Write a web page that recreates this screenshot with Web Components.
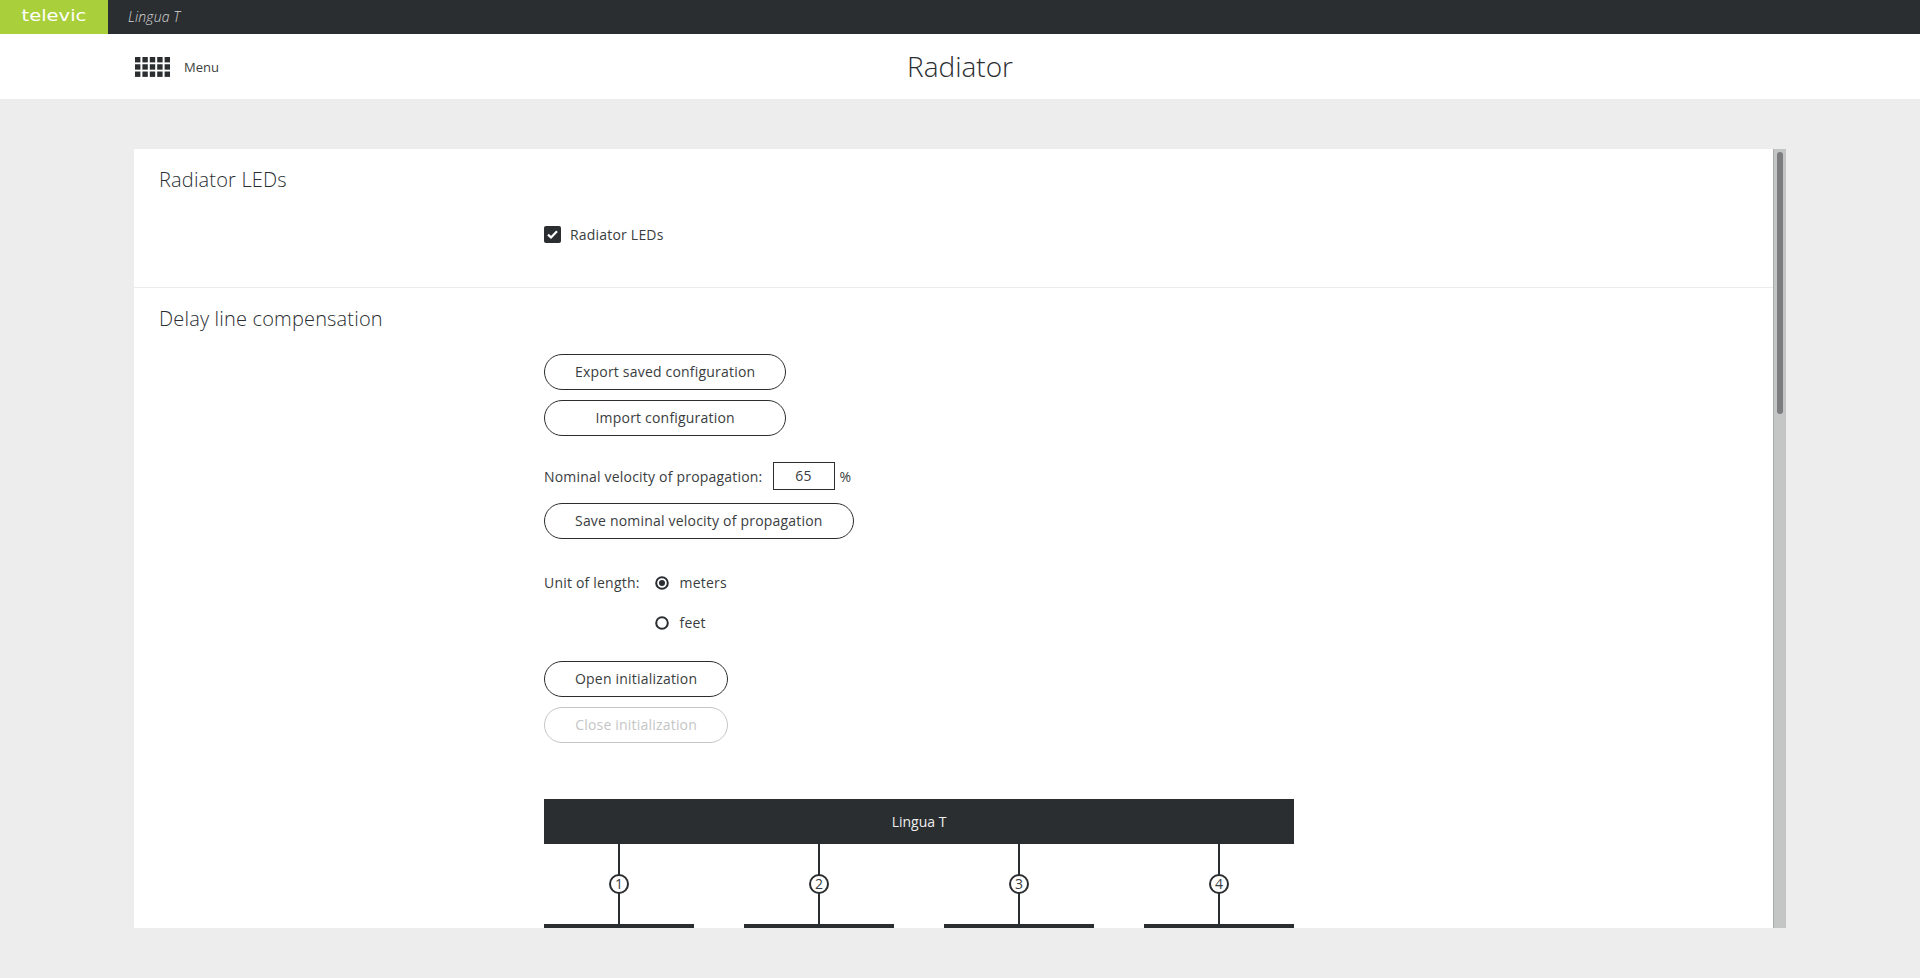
<!DOCTYPE html>
<html lang="en">
<head>
<meta charset="utf-8">
<title>Radiator</title>
<style>
  html, body { margin: 0; height: 100%; overflow: hidden; }
  body { background: #ededed; color: #2a2e31; font-family: "Open Sans", "Liberation Sans", sans-serif; }
</style>
</head>
<body>
<app-bar product="Lingua T"></app-bar>
<page-header heading="Radiator"></page-header>
<main-panel>
  <panel-section heading="Radiator LEDs" style="height:139px; --body-top:29px">
    <led-checkbox>Radiator LEDs</led-checkbox>
  </panel-section>
  <panel-section heading="Delay line compensation" style="--body-top:22px" last>
    <delay-form></delay-form>
    <line-diagram></line-diagram>
  </panel-section>
</main-panel>

<script>
class AppBar extends HTMLElement {
  constructor() {
    super();
    this.attachShadow({ mode: "open" });
  }

  connectedCallback() {
    this.shadowRoot.innerHTML = `
      <style>
        :host { display: flex; height: 34px; background: #2a2e31; align-items: center; }
        .logo {
          width: 108px;
          height: 34px;
          background: #a9d03a;
          display: flex;
          align-items: center;
          justify-content: center;
          color: #fff;
          font-family: "DejaVu Sans", sans-serif;
          font-size: 15px;
          overflow: hidden;
        }
        .logo span { display: inline-block; transform: translateY(-1px) scaleX(1.3); }
        .product {
          margin-left: 20px;
          padding-bottom: 2px;
          color: #d5d6d6;
          font-size: 14px;
          font-style: italic;
          font-weight: 300;
          letter-spacing: 0.15px;
        }
      </style>
      <div class="logo"><span>televic</span></div>
      <div class="product">${this.getAttribute("product")}</div>
    `;
  }
}

class PageHeader extends HTMLElement {
  constructor() {
    super();
    this.attachShadow({ mode: "open" });
  }

  connectedCallback() {
    this.shadowRoot.innerHTML = `
      <style>
        :host {
          display: grid;
          grid-template-columns: 1fr auto 1fr;
          align-items: center;
          height: 65px;
          padding-left: 135px;
          padding-right: 135px;
          background: #fff;
        }
        .menu { display: flex; align-items: center; gap: 14px; font-size: 13px; color: #3b3e41; }
        svg { display: block; }
        h1 { margin: 0; padding-bottom: 2px; font-size: 28px; font-weight: 300; color: #2a2e31; }
      </style>
      <div class="menu">
        <svg width="35" height="20" viewBox="0 0 35 20" fill="#2a2e31">
          ${[0, 7.25, 14.5].map(y => [0, 7.4, 14.8, 22.2, 29.6].map(x => `<rect x="${x}" y="${y}" width="5.4" height="5.4"/>`).join("")).join("")}
        </svg>
        <span>Menu</span>
      </div>
      <h1>${this.getAttribute("heading")}</h1>
      <div></div>
    `;
  }
}

class MainPanel extends HTMLElement {
  constructor() {
    super();
    this.attachShadow({ mode: "open" });
  }

  connectedCallback() {
    this.shadowRoot.innerHTML = `
      <style>
        :host { display: flex; margin: 50px 134px 0; height: 779px; background: #fff; }
        .scroll { flex: 1; min-width: 0; overflow: hidden; }
        .track {
          box-sizing: border-box;
          flex: none;
          width: 13px;
          padding: 3px 3px 0 3px;
          background: #c4c6c5;
          border-left: 1px solid #a9abaa;
        }
        .thumb { height: 262px; border-radius: 4px; background: #7a7e7e; }
      </style>
      <div class="scroll"><slot></slot></div>
      <div class="track"><div class="thumb"></div></div>
    `;
  }
}

class PanelSection extends HTMLElement {
  constructor() {
    super();
    this.attachShadow({ mode: "open" });
  }

  connectedCallback() {
    this.shadowRoot.innerHTML = `
      <style>
        :host { display: block; box-sizing: border-box; border-bottom: 1px solid #ececec; }
        :host([last]) { border-bottom: 0; }
        h2 {
          margin: 0;
          padding: 17px 25px 0;
          font-size: 20px;
          line-height: 27px;
          font-weight: 300;
          letter-spacing: 0.17px;
          color: #2a2e31;
        }
        .body { padding: var(--body-top, 28px) 0 0 410px; }
      </style>
      <h2>${this.getAttribute("heading")}</h2>
      <div class="body"><slot></slot></div>
    `;
  }
}

class LedCheckbox extends HTMLElement {
  constructor() {
    super();
    this.attachShadow({ mode: "open" });
  }

  connectedCallback() {
    this.shadowRoot.innerHTML = `
      <style>
        :host { display: inline-flex; align-items: center; gap: 9px; font-size: 14px; font-weight: 500; letter-spacing: 0.2px; line-height: 17px; color: #3a3d40; }
        .box { width: 17px; height: 17px; border-radius: 2px; background: #2a2e31; display: flex; align-items: center; justify-content: center; }
      </style>
      <span class="box">
        <svg width="11" height="9" viewBox="0 0 11 9"><path d="M1 4.6 L4 7.4 L10 1.2" fill="none" stroke="#fff" stroke-width="2.2"/></svg>
      </span>
      <span><slot></slot></span>
    `;
  }
}

class PillButton extends HTMLElement {
  constructor() {
    super();
    this.attachShadow({ mode: "open" });
  }

  connectedCallback() {
    this.shadowRoot.innerHTML = `
      <style>
        :host {
          display: block;
          box-sizing: border-box;
          height: 36px;
          padding: 0 30px;
          border: 1px solid #2a2e31;
          border-radius: 18px;
          font-size: 14px;
          font-weight: 500;
          letter-spacing: 0.2px;
          line-height: 34px;
          text-align: center;
          white-space: nowrap;
          color: #3a3d40;
          background: #fff;
        }
        :host([disabled]) { border-color: #c4c6c6; color: #c4c6c6; }
      </style>
      <slot></slot>
    `;
  }
}

class RadioOption extends HTMLElement {
  constructor() {
    super();
    this.attachShadow({ mode: "open" });
  }

  connectedCallback() {
    this.shadowRoot.innerHTML = `
      <style>
        :host { display: flex; align-items: center; gap: 11px; font-size: 14px; font-weight: 500; letter-spacing: 0.2px; line-height: 20px; color: #3a3d40; }
        svg { display: block; }
      </style>
      <svg width="14" height="14" viewBox="0 0 14 14">
        <circle cx="7" cy="7" r="5.8" fill="none" stroke="#2a2e31" stroke-width="2"/>
        ${this.hasAttribute("checked") ? '<circle cx="7" cy="7" r="3" fill="#2a2e31"/>' : ""}
      </svg>
      <span><slot></slot></span>
    `;
  }
}

class DelayForm extends HTMLElement {
  constructor() {
    super();
    this.attachShadow({ mode: "open" });
  }

  connectedCallback() {
    this.shadowRoot.innerHTML = `
      <style>
        :host { display: block; font-size: 14px; font-weight: 500; letter-spacing: 0.2px; color: #3a3d40; }
        .group { display: inline-grid; gap: 10px; vertical-align: top; }
        .stack { display: block; }
        .velocity { display: flex; align-items: center; height: 28px; margin-top: 26px; }
        .input {
          box-sizing: border-box;
          width: 62px;
          height: 28px;
          margin: 0 5px 0 10px;
          border: 1px solid #2a2e31;
          font-weight: 400;
          line-height: 26px;
          text-align: center;
        }
        .save { margin-top: 13px; }
        .unit { display: grid; grid-template-columns: auto auto; justify-content: start; column-gap: 15px; row-gap: 20px; margin-top: 34px; }
        .init { margin-top: 28px; }
      </style>
      <div class="stack"><div class="group">
        <pill-button>Export saved configuration</pill-button>
        <pill-button>Import configuration</pill-button>
      </div></div>
      <div class="velocity">
        <span>Nominal velocity of propagation:</span>
        <span class="input">65</span>
        <span>%</span>
      </div>
      <div class="stack save"><div class="group">
        <pill-button>Save nominal velocity of propagation</pill-button>
      </div></div>
      <div class="unit">
        <span>Unit of length:</span>
        <radio-option checked>meters</radio-option>
        <span></span>
        <radio-option>feet</radio-option>
      </div>
      <div class="stack init"><div class="group">
        <pill-button>Open initialization</pill-button>
        <pill-button disabled>Close initialization</pill-button>
      </div></div>
    `;
  }
}

class LineDiagram extends HTMLElement {
  constructor() {
    super();
    this.attachShadow({ mode: "open" });
  }

  connectedCallback() {
    const lines = [1, 2, 3, 4].map(n => `
      <div class="line">
        <div class="wire"><span class="num">${n}</span></div>
        <div class="booth"></div>
      </div>`).join("");
    this.shadowRoot.innerHTML = `
      <style>
        :host { display: block; width: 750px; margin-top: 56px; }
        .head {
          height: 45px;
          line-height: 45px;
          background: #2a2e31;
          color: #eee;
          font-size: 14px;
          text-align: center;
        }
        .lines { display: grid; grid-template-columns: repeat(4, 150px); justify-content: space-between; }
        .wire {
          position: relative;
          height: 80px;
          display: flex;
          align-items: center;
          justify-content: center;
        }
        .wire::before {
          content: "";
          position: absolute;
          top: 0;
          bottom: 0;
          left: 74px;
          width: 2px;
          background: #2a2e31;
        }
        .num {
          position: relative;
          box-sizing: border-box;
          width: 20px;
          height: 20px;
          border: 2px solid #2a2e31;
          border-radius: 50%;
          background: #fff;
          font-size: 14px;
          line-height: 16px;
          text-align: center;
          color: #3a3d40;
        }
        .booth { height: 90px; background: #2a2e31; }
      </style>
      <div class="head">Lingua T</div>
      <div class="lines">${lines}</div>
    `;
  }
}

customElements.define("app-bar", AppBar);
customElements.define("page-header", PageHeader);
customElements.define("main-panel", MainPanel);
customElements.define("panel-section", PanelSection);
customElements.define("led-checkbox", LedCheckbox);
customElements.define("pill-button", PillButton);
customElements.define("radio-option", RadioOption);
customElements.define("delay-form", DelayForm);
customElements.define("line-diagram", LineDiagram);
</script>
</body>
</html>
